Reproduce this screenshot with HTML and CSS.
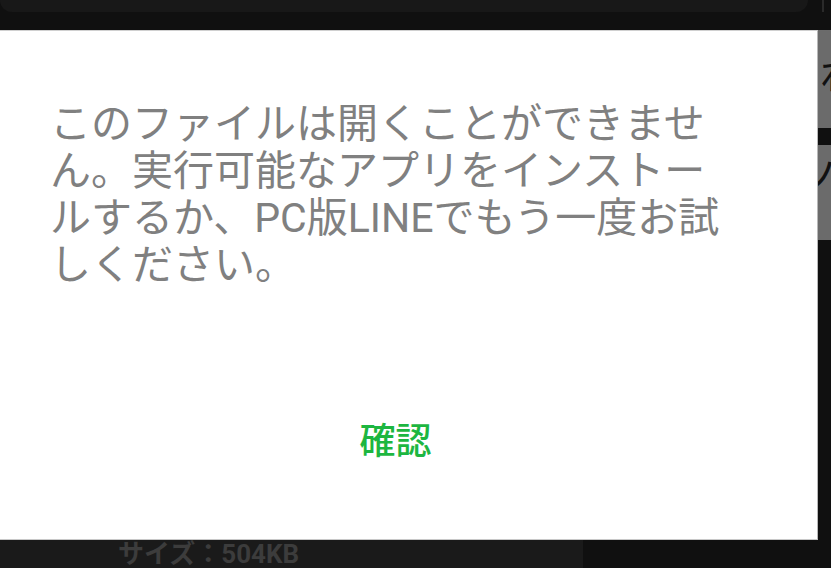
FILE: index.html
```html
<!DOCTYPE html>
<html lang="ja">
<head>
<meta charset="utf-8">
<link rel="stylesheet" href="styles.css">
</head>
<body>
<div class="screen">
  <div class="top">
    <div class="top-bar"></div>
    <div class="top-edge"></div>
  </div>
  <div class="middle">
    <div class="dialog">
      <p class="message">このファイルは開くことができませ<br>ん。実行可能なアプリをインストー<br>ルするか、PC版LINEでもう一度お試<br>しください。</p>
      <div class="actions"><span class="ok">確認</span></div>
    </div>
    <div class="side">
      <div class="side-panel">
        <div class="side-glyph g1">わ</div>
        <div class="side-bar"></div>
        <div class="side-glyph g2">ノ</div>
      </div>
    </div>
  </div>
  <div class="bottom">
    <div class="bottom-panel"><span class="size">サイズ：504KB</span></div>
  </div>
</div>
</body>
</html>
```
FILE: styles.css
```css
html, body {
  margin: 0;
  padding: 0;
  background: #101010;
}
body {
  width: 831px;
  height: 568px;
  overflow: hidden;
  font-family: Roboto, "Noto Sans CJK JP", sans-serif;
}
.screen {
  display: flex;
  flex-direction: column;
  width: 831px;
  height: 568px;
}
.top {
  height: 30px;
  display: flex;
  align-items: flex-start;
  flex: none;
}
.top-bar {
  width: 808px;
  height: 12px;
  background: #181818;
  border-radius: 0 0 14px 14px;
}
.top-edge {
  margin-left: 14px;
  width: 2px;
  height: 12px;
  background: #2a2a2a;
}
.middle {
  display: flex;
  height: 510px;
  flex: none;
}
.dialog {
  flex: none;
  width: 844px;
  margin-left: -26px;
  height: 510px;
  box-sizing: border-box;
  background: #fff;
  border-right: 1px solid #b8b8b8;
  border-bottom: 1px solid #c8c8c8;
  border-top: 1px solid #d0d0d0;
  display: flex;
  flex-direction: column;
  padding: 70px 0 0 76px;
}
.message {
  margin: 0;
  font-size: 41px;
  line-height: 47px;
  color: #808080;
  white-space: nowrap;
}
.actions {
  margin-top: auto;
  margin-bottom: 72px;
  margin-left: -76px;
  display: flex;
  justify-content: center;
}
.ok {
  font-size: 36px;
  line-height: 50px;
  color: #1db640;
  font-weight: 500;
}
.side {
  flex: 1;
  overflow: hidden;
}
.side-panel {
  height: 210px;
  background: #6b6b6b;
  position: relative;
  overflow: hidden;
}
.side-glyph {
  position: absolute;
  left: 2px;
  font-size: 40px;
  line-height: 40px;
  color: #111;
}
.g1 { top: 26px; }
.g2 { top: 128px; left: -18px; }
.side-bar {
  position: absolute;
  left: 0;
  right: 0;
  top: 98px;
  height: 17px;
  background: #101010;
}
.bottom {
  flex: none;
  height: 28px;
  display: flex;
}
.bottom-panel {
  width: 583px;
  height: 28px;
  background: #1a1a1a;
  padding-left: 118px;
  box-sizing: border-box;
}
.size {
  font-size: 26px;
  line-height: 28px;
  font-weight: 700;
  color: #3c3c3c;
  white-space: nowrap;
}
```
